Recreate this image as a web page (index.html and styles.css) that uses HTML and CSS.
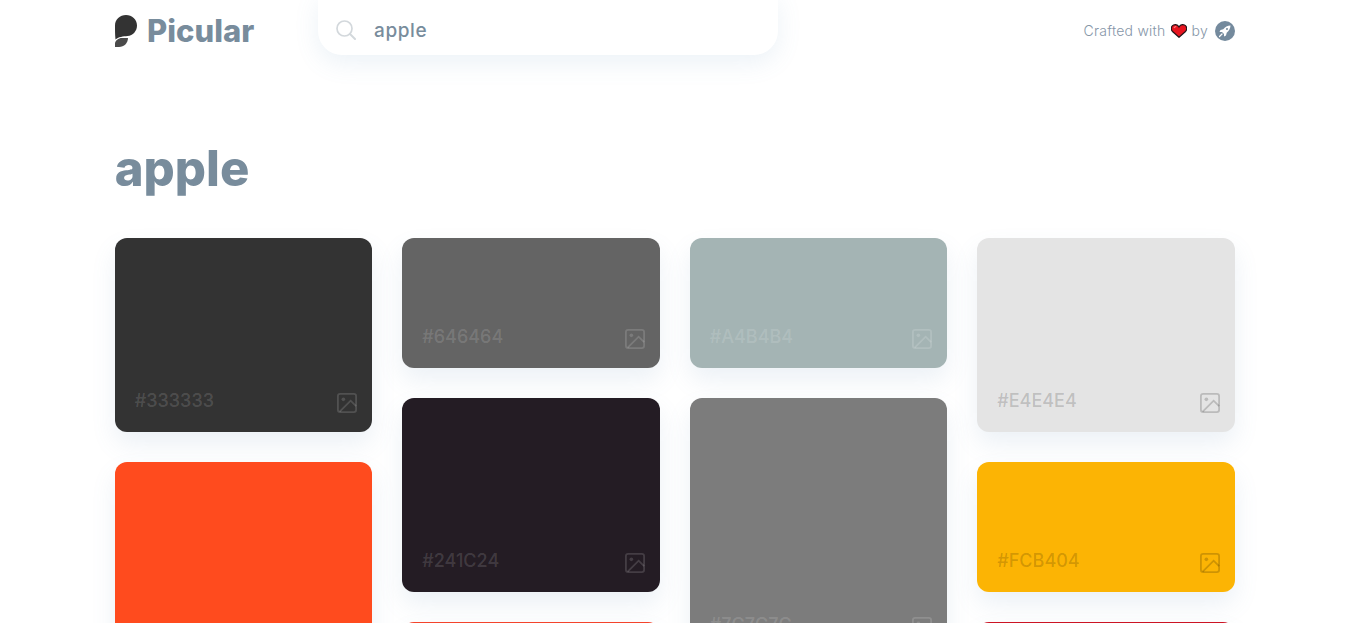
FILE: index.html
```html
<!DOCTYPE html>
<html lang="en">
<head>
<meta charset="utf-8">
<title>Picular - apple</title>
<link rel="stylesheet" href="styles.css">
</head>
<body>
<svg class="sprite" width="0" height="0" aria-hidden="true">
  <symbol id="img" viewBox="0 0 22 22">
    <rect x="1" y="1" width="20" height="20" rx="2.500" fill="none" stroke="currentColor" stroke-width="2"/>
    <circle cx="7" cy="7" r="2" fill="currentColor"/>
    <path d="M21 14.500 15 8.500 3 20.500" fill="none" stroke="currentColor" stroke-width="2"/>
  </symbol>
</svg>
<header class="top">
  <a class="brand">
    <svg class="logo" viewBox="0 0 22 32" width="22" height="32" aria-hidden="true">
      <path d="M0 10.500C0 4.500 5 0 11 0s11 4.500 11 10.500c0 5.500-4 10-9.500 10.500-4 .3-9.500 1-12 3.500C0 20 0 15 0 10.500Z" fill="#333"/>
      <path d="M0 32v-3.500C0 25.500 3.500 23 7 23h6c0 5-4 9-9 9H0Z" fill="#4a4a4a"/>
    </svg>
    <span class="brand-name">Picular</span>
  </a>
  <div class="search">
    <svg class="search-icon" viewBox="0 0 20 20" width="20" height="20" aria-hidden="true">
      <circle cx="8.500" cy="8.500" r="7.500" fill="none" stroke="#d3d8dc" stroke-width="1.700"/>
      <path d="m14 14 5 5" stroke="#d3d8dc" stroke-width="2" stroke-linecap="round"/>
    </svg>
    <span class="query">apple</span>
  </div>
  <div class="credit">
    <span>Crafted with</span>
    <svg class="heart" viewBox="0 0 16 14" width="16" height="14" aria-hidden="true">
      <path d="M8 13.300 1.500 7.500C-.5 5.500.2 1.800 2.500 1 4.700.2 6.900.9 8 3c1.100-2.100 3.300-2.800 5.500-2 2.300.8 3 4.500 1 6.500Z" fill="#e8141f" stroke="#241418" stroke-width="1.200"/>
      <path d="M3 4C3.500 3 4.500 2.500 5.300 2.700" fill="none" stroke="#ff8080" stroke-width="1.100"/>
    </svg>
    <span>by</span>
    <span class="badge">
      <svg viewBox="0 0 20 20" width="20" height="20" aria-hidden="true">
        <circle cx="10" cy="10" r="10" fill="#748a9d"/>
        <path fill-rule="evenodd" d="M15.500 4.500C12.500 4.700 10 6 8.300 8.300L5.500 9 4.500 11H7l2 2v2.500l2-1 .7-2.800C14 10 15.300 7.500 15.500 4.500ZM12 7a1 1 0 1 1 0 2 1 1 0 0 1 0-2Z" fill="#fff"/>
        <path d="M4.500 15.500 7 13" stroke="#fff" stroke-width="1.200" stroke-linecap="round"/>
      </svg>
    </span>
  </div>
</header>
<main class="page">
  <h1 class="title">apple</h1>
  <div class="grid">
    <div class="col">
      <div class="card tall dark" style="background:#333333"><span>#333333</span><svg class="pic"><use href="#img"/></svg></div>
      <div class="card tall dark" style="background:#FF4B1E"></div>
    </div>
    <div class="col">
      <div class="card short dark" style="background:#646464"><span>#646464</span><svg class="pic"><use href="#img"/></svg></div>
      <div class="card tall dark" style="background:#241C24"><span>#241C24</span><svg class="pic"><use href="#img"/></svg></div>
      <div class="card tall dark" style="background:#F4442C"></div>
    </div>
    <div class="col">
      <div class="card short dark" style="background:#A4B4B4"><span>#A4B4B4</span><svg class="pic"><use href="#img"/></svg></div>
      <div class="card huge dark" style="background:#7C7C7C"><span>#7C7C7C</span><svg class="pic"><use href="#img"/></svg></div>
    </div>
    <div class="col">
      <div class="card tall light" style="background:#E4E4E4"><span>#E4E4E4</span><svg class="pic"><use href="#img"/></svg></div>
      <div class="card short light" style="background:#FCB404"><span>#FCB404</span><svg class="pic"><use href="#img"/></svg></div>
      <div class="card tall dark" style="background:#CC1424"></div>
    </div>
  </div>
</main>
</body>
</html>
```
FILE: styles.css
```css
* { box-sizing: border-box; }
html, body { margin: 0; height: 623px; overflow: hidden; background: #fff; }
body { font-family: "Inter", "Liberation Sans", sans-serif; position: relative; }
.sprite { display: block; height: 0; }

.top { display: flex; align-items: center; height: 61px; padding: 0 112px 0 115px; }
.brand { display: flex; align-items: center; gap: 10px; width: 203px; }
.logo { display: block; }
.brand-name { font-family: "Inter", sans-serif; font-weight: 800; font-size: 31px; line-height: 1; color: #788c9c; }

.search {
  display: flex; align-items: center; gap: 18px;
  width: 460px; height: 61px; margin-top: -12px; padding: 12px 20px 0 18px;
  background: #fff; border-radius: 0 0 24px 24px;
  box-shadow: 0 8px 24px rgba(100, 150, 190, .12);
}
.search-icon { display: block; margin-top: -1px; }
.query { font-size: 19px; font-weight: 500; letter-spacing: .6px; color: #788c9c; }

.credit { display: flex; align-items: center; margin-left: auto; gap: 5px; font-size: 14px; font-weight: 300; letter-spacing: .25px; color: #8696a8; }
.badge { display: block; height: 20px; margin-left: 2px; }
.badge svg, .heart { display: block; }

.page { padding: 0 0 0 114.75px; }
.title { margin: 72px 0 0; height: 105px; font-family: "Inter", sans-serif; font-weight: 800; font-size: 49px; line-height: 72px; color: #788c9c; }

.grid { display: grid; grid-template-columns: repeat(4, 1fr); gap: 30px; width: 1120px; }
.col { display: flex; flex-direction: column; gap: 30px; }
.card {
  display: flex; flex: none; justify-content: space-between; align-items: flex-end;
  padding: 0 15px 19px 20px; border-radius: 12px;
  box-shadow: 0 12px 24px rgba(100, 140, 180, .12);
  font-size: 18px; font-weight: 500;
}
.card span { line-height: 24px; }
.short { height: 130px; }
.tall { height: 194px; }
.huge { height: 258px; }
.dark { color: rgba(255, 255, 255, .15); }
.light { color: rgba(0, 0, 0, .18); }
.pic { width: 20px; height: 20px; display: block; }
```
